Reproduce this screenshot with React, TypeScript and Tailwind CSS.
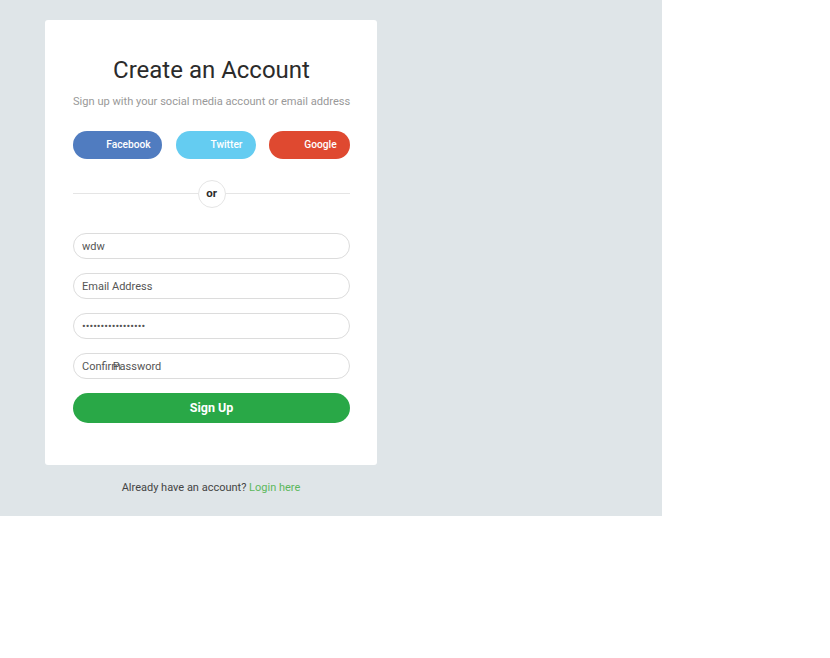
import React from 'react';

const socials = [
  { label: 'Facebook', bg: 'bg-[#507cc0]', width: 'w-[89px]' },
  { label: 'Twitter', bg: 'bg-[#64ccf1]', width: 'w-[80px]' },
  { label: 'Google', bg: 'bg-[#df4930]', width: 'w-[81px]' },
];

export default function App() {
  return (
    <div className="min-h-[658px] bg-white font-['Roboto',sans-serif]">
      <div className="w-[662px] h-[516px] bg-[#dfe5e8] pt-[20px] pl-[45px]">
        <div className="w-[332px] bg-white rounded-[3px] pl-[28px] pr-[27px] pt-[36px] pb-[42px]">
          <h2 className="text-center text-[24px] leading-[28px] text-[#2b2b2b] font-normal">
            Create an Account
          </h2>
          <p className="text-center text-[11.1px] leading-[16px] text-[#999] mt-[10px] whitespace-nowrap">
            Sign up with your social media account or email address
          </p>

          <div className="flex justify-between mt-[21px]">
            {socials.map((s) => (
              <button
                key={s.label}
                className={`${s.bg} ${s.width} h-[28px] rounded-full text-white text-[10.2px] font-medium pl-[22px]`}
              >
                {s.label}
              </button>
            ))}
          </div>

          <div className="relative mt-[21px] h-[28px] flex items-center justify-center">
            <div className="absolute left-0 right-0 top-[13px] border-t border-[#e5e5e5]" />
            <span className="relative w-[28px] h-[28px] rounded-full border border-[#e5e5e5] bg-white flex items-center justify-center text-[11.5px] font-bold text-[#2b2b2b]">
              or
            </span>
          </div>

          <div className="flex flex-col gap-[14px] mt-[25px]">
            <input
              className="h-[26px] rounded-full border border-[#dcdcdc] px-[8px] text-[11px] text-[#555] outline-none"
              defaultValue="wdw"
            />
            <input
              className="h-[26px] rounded-full border border-[#dcdcdc] px-[8px] text-[11px] text-[#555] outline-none placeholder:text-[#555]"
              placeholder="Email Address"
            />
            <input
              type="password"
              className="h-[26px] rounded-full border border-[#dcdcdc] px-[8px] text-[11px] text-[#555] outline-none"
              defaultValue="12345678901234567"
            />
            <input
              type="password"
              className="h-[26px] rounded-full border border-[#dcdcdc] px-[8px] text-[11px] text-[#555] outline-none placeholder:text-[#555] placeholder:[word-spacing:-11px]"
              placeholder="Confirm Password"
            />
          </div>

          <button className="w-full h-[30px] mt-[14px] rounded-full bg-[#29a847] text-white text-[12.5px] font-bold">
            Sign Up
          </button>
        </div>

        <p className="w-[332px] text-center text-[11px] text-[#444] mt-[15px]">
          Already have an account? <a className="text-[#5cb85c]">Login here</a>
        </p>
      </div>
    </div>
  );
}
